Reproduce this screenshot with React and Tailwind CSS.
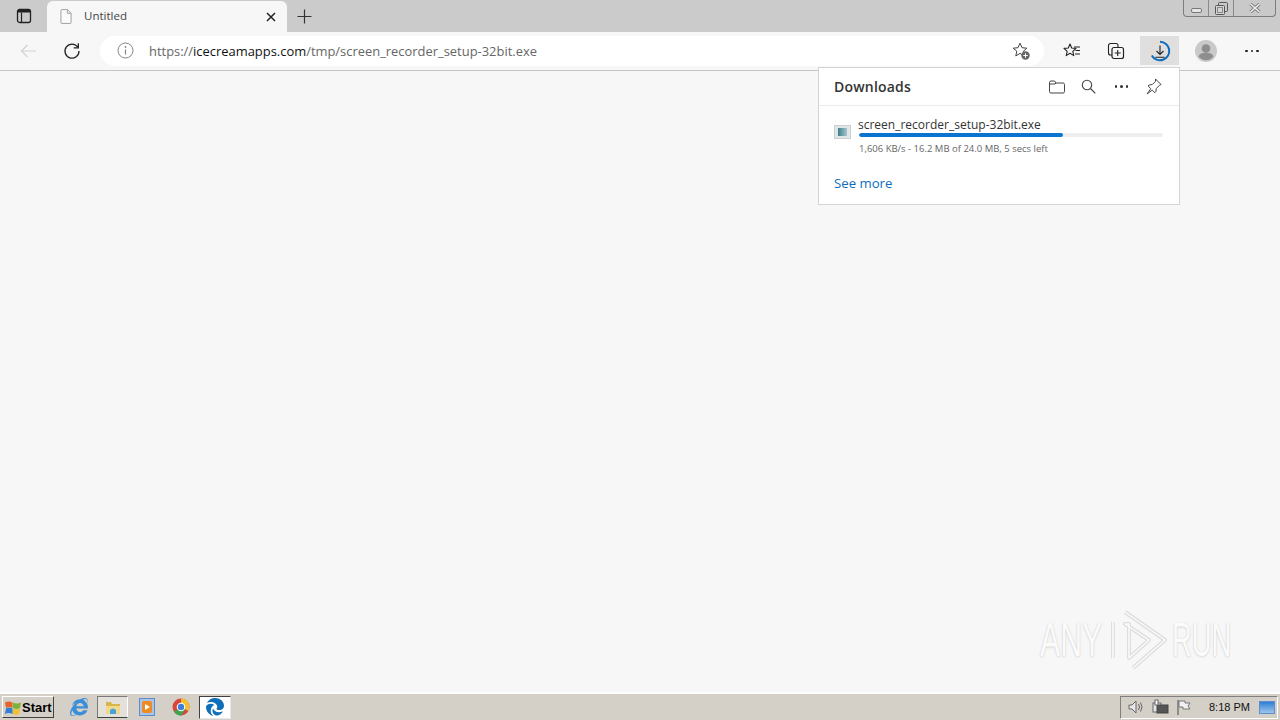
import React from "react";
import { FaInternetExplorer, FaEdge } from "react-icons/fa6";

function Ic({ w = 20, h = 20, className = "", children }) {
  return (
    <svg width={w} height={h} viewBox={`0 0 ${w} ${h}`} fill="none" className={className}>
      {children}
    </svg>
  );
}

function TitleBar() {
  return (
    <div className="flex h-8 bg-[#cbcbcb] shrink-0">
      <div className="w-[47px] flex items-center justify-center shrink-0">
        <Ic w={16} h={16}>
          <rect x="1.5" y="1.5" width="13" height="13" rx="2" stroke="#222" strokeWidth="1.3" />
          <path d="M1.5 4.5h13V3a1.5 1.5 0 0 0-1.5-1.5H3A1.5 1.5 0 0 0 1.5 3z" fill="#222" />
          <path d="M5.5 4.5v10" stroke="#222" strokeWidth="1.2" />
        </Ic>
      </div>
      <div className="w-[240px] mt-px bg-[#f7f7f7] rounded-t-[6px] flex items-center shrink-0">
        <div className="w-[12px] ml-[13px] shrink-0 flex">
          <Ic w={13} h={17}>
            <path d="M1 2a1 1 0 0 1 1-1h6l4 4v10a1 1 0 0 1-1 1H2a1 1 0 0 1-1-1z" stroke="#9a9a9a" strokeWidth="1" fill="#fbfbfb" />
            <path d="M8 1v4h4" stroke="#9a9a9a" strokeWidth="1" />
          </Ic>
        </div>
        <span className="ml-[12px] mt-[-2px] text-[11.5px] text-[#444]">Untitled</span>
        <div className="ml-auto mr-[11px] flex">
          <Ic w={10} h={10}>
            <path d="M1 1l8 8M9 1l-8 8" stroke="#222" strokeWidth="1.5" />
          </Ic>
        </div>
      </div>
      <div className="ml-[10px] flex items-center shrink-0">
        <Ic w={15} h={15}>
          <path d="M7.5 0.5v14M0.5 7.5h14" stroke="#333" strokeWidth="1.2" />
        </Ic>
      </div>
      <div className="ml-auto mr-[4px] self-start flex h-[17px] w-[93px] border border-t-0 border-[#7d7d7d] rounded-b-[4px] bg-[#c9c9c9]">
        <div className="w-[25px] border-r border-[#8a8a8a] flex items-center justify-center">
          <div className="w-[11px] h-[5px] mt-[4px] rounded-[2px] border border-[#777] bg-[#e6e6e6]" />
        </div>
        <div className="w-[25px] border-r border-[#8a8a8a] flex items-center justify-center">
          <Ic w={13} h={13}>
            <rect x="3.5" y="0.5" width="9" height="9" rx="1" stroke="#555" />
            <rect x="0.5" y="3.5" width="9" height="9" rx="1" stroke="#555" fill="#d4d4d4" />
            <rect x="2.5" y="5.5" width="5" height="5" stroke="#888" />
          </Ic>
        </div>
        <div className="flex-1 flex items-center justify-center">
          <Ic w={12} h={10}>
            <path d="M1.5 1l9 8M10.5 1l-9 8" stroke="#777" strokeWidth="3.2" />
            <path d="M1.5 1l9 8M10.5 1l-9 8" stroke="#eee" strokeWidth="1.6" />
          </Ic>
        </div>
      </div>
    </div>
  );
}

function Dots({ color }) {
  return (
    <div className="flex gap-[3px] shrink-0">
      <div className={`w-[2.5px] h-[2.5px] rounded-full ${color}`} />
      <div className={`w-[2.5px] h-[2.5px] rounded-full ${color}`} />
      <div className={`w-[2.5px] h-[2.5px] rounded-full ${color}`} />
    </div>
  );
}

function ToolBar() {
  return (
    <div className="relative flex items-center h-[39px] bg-[#f7f7f7] border-b border-[#c6c6c6] shrink-0">
      <div className="w-[100px] flex items-center shrink-0">
        <div className="ml-[20px] flex">
          <Ic w={17} h={14}>
            <path d="M16 7H1.5M7.5 1L1.5 7l6 6" stroke="#d2d2d2" strokeWidth="1.2" />
          </Ic>
        </div>
        <div className="ml-[26px] flex">
          <Ic w={18} h={18}>
            <path d="M14.8 5.2A7 7 0 1 0 16 9" stroke="#222" strokeWidth="1.3" />
            <path d="M15.3 1.2v4.6h-4.6" stroke="#222" strokeWidth="1.3" />
          </Ic>
        </div>
      </div>
      <div className="w-[944px] h-[30px] mt-[-1px] bg-white rounded-full flex items-center shrink-0">
        <div className="ml-[17px] flex">
          <Ic w={17} h={17}>
            <circle cx="8.5" cy="8.5" r="7.5" stroke="#858585" strokeWidth="1" />
            <path d="M8.5 7.5v5" stroke="#858585" strokeWidth="1.2" />
            <circle cx="8.5" cy="5" r="0.9" fill="#858585" />
          </Ic>
        </div>
        <span className="ml-[15px] mt-[2px] text-[12.93px] text-[#666] whitespace-nowrap">
          https://<span className="text-[#111]">icecreamapps.com</span>/tmp/screen_recorder_setup-32bit.exe
        </span>
        <div className="ml-auto mr-[13px] flex">
          <Ic w={20} h={20}>
            <path d="M9 2.2l2 4.5 4.8.5-3.6 3.2 1 4.7L9 12.4l-4.2 2.5 1-4.7L2.2 7.2 7 6.7z" stroke="#444" strokeWidth="1" strokeLinejoin="round" />
            <circle cx="14.5" cy="14.5" r="4.2" fill="#666" />
            <path d="M14.5 12.3v4.4M12.3 14.5h4.4" stroke="#fff" strokeWidth="1" />
          </Ic>
        </div>
      </div>
      <div className="ml-[19px] flex shrink-0">
        <Ic w={18} h={18}>
          <path d="M7 2l1.7 4 4.3.4-3.2 2.9 1 4.3L7 11.3l-3.8 2.3 1-4.3L1 6.4l4.3-.4z" stroke="#222" strokeWidth="1.1" strokeLinejoin="round" />
          <path d="M11 5h6M12.5 8.5H17M12 12h5" stroke="#222" strokeWidth="1.1" />
        </Ic>
      </div>
      <div className="ml-[26px] flex shrink-0">
        <Ic w={18} h={18}>
          <path d="M5 13H3.5A2 2 0 0 1 1.5 11V3.5a2 2 0 0 1 2-2H9a2 2 0 0 1 2 2V5" stroke="#222" strokeWidth="1.1" />
          <rect x="5" y="5.5" width="11.5" height="11" rx="2" stroke="#222" strokeWidth="1.2" fill="#f7f7f7" />
          <path d="M10.7 8v6M7.7 11h6" stroke="#222" strokeWidth="1.1" />
        </Ic>
      </div>
      <div className="ml-[15px] w-[39px] h-[29px] mt-[-1px] bg-[#dfdfdf] flex items-center justify-center shrink-0">
        <Ic w={22} h={22}>
          <circle cx="11" cy="11" r="9.3" stroke="#f3d9b8" strokeWidth="1" />
          <path d="M11 1.7A9.3 9.3 0 1 1 2.8 15.5" stroke="#0f6cbd" strokeWidth="2" />
          <path d="M11 5.5v9M7.5 11l3.5 3.5 3.5-3.5M6.5 17.2h9" stroke="#222" strokeWidth="1.1" />
        </Ic>
      </div>
      <div className="ml-[16px] flex shrink-0">
        <Ic w={22} h={22}>
          <circle cx="11" cy="11" r="11" fill="#c9c9c9" />
          <circle cx="11" cy="8.5" r="4.3" fill="#8e8e8e" />
          <path d="M3.5 16.5c1-3 3.5-3.8 7.5-3.8s6.5.8 7.5 3.8c-1.800 2.400-4.500 3.800-7.500 3.800s-5.700-1.400-7.500-3.800z" fill="#8e8e8e" />
        </Ic>
      </div>
      <div className="ml-[28px]">
        <Dots color="bg-[#222]" />
      </div>
    </div>
  );
}

function DownloadsPanel() {
  return (
    <div className="absolute left-[818px] top-[67px] w-[362px] h-[138px] bg-white border border-[#d4d4d4] z-10">
      <div className="flex items-center h-[38px] border-b border-[#ececec]">
        <span className="ml-[15px] text-[14px] font-semibold text-[#333] leading-none tracking-[0.2px]">Downloads</span>
        <div className="ml-auto flex items-center">
          <Ic w={18} h={16}>
            <path d="M1.5 3.5a1.5 1.5 0 0 1 1.5-1.5h3.5l1.5 2h7a1.5 1.5 0 0 1 1.5 1.5v7a1.5 1.5 0 0 1-1.5 1.5H3a1.5 1.5 0 0 1-1.5-1.5z" stroke="#444" strokeWidth="1" />
            <path d="M1.5 5h5.5l1-1" stroke="#444" strokeWidth="1" />
          </Ic>
          <div className="ml-[15px] flex">
            <Ic w={15} h={15}>
              <circle cx="6" cy="6" r="4.7" stroke="#444" strokeWidth="1.1" />
              <path d="M9.5 9.5l4.8 4.8" stroke="#444" strokeWidth="1.2" />
            </Ic>
          </div>
          <div className="ml-[19px]">
            <Dots color="bg-[#333]" />
          </div>
          <div className="ml-[17px] mr-[17px] flex">
            <Ic w={17} h={17}>
              <path d="M10.5 1l5.5 5.5-1.5.8-3.2 3.2-.5 3.2-1 1-2.6-2.6L2 16l3.8-5.3-2.7-2.7 1-1 3.2-.5 3.2-3.2z" stroke="#444" strokeWidth="1" strokeLinejoin="round" />
            </Ic>
          </div>
        </div>
      </div>
      <div className="flex mt-[10px]">
        <div className="ml-[15px] mt-[9px] w-[17px] h-[14px] shrink-0 border border-[#cfcfcf] bg-[#dfe6e8] flex items-center justify-center">
          <div className="w-[9px] h-[8px] bg-gradient-to-r from-[#3d7e8c] to-[#a8c6cf]" />
        </div>
        <div className="ml-[7px] w-[305px] mt-[2px]">
          <div className="text-[12px] leading-[14px] text-[#333] whitespace-nowrap">screen_recorder_setup-32bit.exe</div>
          <div className="mt-[1px] ml-[1px] h-[4px] rounded-full bg-[#eeeeee] overflow-hidden">
            <div className="h-full w-[204px] rounded-full bg-[#0a74d1]" />
          </div>
          <div className="mt-[6px] ml-[1px] text-[9.5px] leading-[12px] text-[#666] whitespace-nowrap">1,606 KB/s - 16.2 MB of 24.0 MB, 5 secs left</div>
        </div>
      </div>
      <div className="ml-[15px] mt-[20px] text-[13.2px] leading-[16px] text-[#0f6cbd]">See more</div>
    </div>
  );
}

function TaskBar() {
  return (
    <div className="flex items-center h-[28px] bg-[#d4d0c8] border-t-2 border-[#ffffff] shrink-0">
      <div className="ml-[2px] w-[52px] h-[22px] flex items-center bg-[#d4d0c8] border border-t-white border-l-white border-r-[#404040] border-b-[#404040] shrink-0">
        <div className="ml-[1px] flex">
          <Ic w={18} h={17}>
            <path d="M1 3.5q3.5-2 7.5 0v5.500q-4-2-6.500 0z" fill="#e8622c" />
            <path d="M9 3.5q4 2 8 0l-1 5.500q-3.500 2-7 0z" fill="#7bb33a" />
            <path d="M2 9.5q3-2 6.500 0v5.500q-4-2-7.500 0z" fill="#2f7fd4" />
            <path d="M9 9.5q3.500 2 7 0l-1 5.500q-3 2-6 0z" fill="#f2c12e" />
          </Ic>
        </div>
        <span className="text-[13px] font-bold text-black leading-none font-['Liberation_Sans',sans-serif]">Start</span>
      </div>
      <div className="ml-[16px] flex shrink-0 relative">
        <FaInternetExplorer size={18} color="#3a8fd8" />
      </div>
      <div className="ml-[9px] w-[31px] h-[22px] flex items-center justify-center bg-[#e4e1da] border border-t-[#7a7a7a] border-l-[#7a7a7a] border-r-white border-b-[#404040] shrink-0">
        <Ic w={16} h={16}>
          <path d="M1 3h5l1 2h8v3H1z" fill="#d9b54a" />
          <path d="M1 7h14v8H1z" fill="#f1d98c" />
          <path d="M5 15v-4q3-3 6 0v4z" fill="#4aa3d8" />
        </Ic>
      </div>
      <div className="ml-[11px] w-[16px] h-[18px] flex items-center justify-center bg-[#a9c4e6] border border-[#5f8ccf] shrink-0">
        <div className="w-[10px] h-[12px] rounded-[2px] bg-[#ee8a22] flex items-center justify-center">
          <div className="w-0 h-0 border-y-[3px] border-y-transparent border-l-[5px] border-l-white" />
        </div>
      </div>
      <div className="ml-[17px] flex shrink-0">
        <Ic w={18} h={18}>
          <circle cx="9" cy="9" r="8.5" fill="#d9453a" />
          <path d="M9 .5A8.5 8.5 0 0 1 16.5 13L9 9z" fill="#f2c12e" />
          <path d="M1.7 13.3A8.5 8.5 0 0 0 9.5 17.5L13.5 11H9z" fill="#3fa34d" />
          <circle cx="9" cy="9" r="4.3" fill="#fff" />
          <circle cx="9" cy="9" r="3.2" fill="#3e7ed8" />
        </Ic>
      </div>
      <div className="ml-[9px] w-[32px] h-[23px] flex items-center justify-center bg-white border border-t-[#404040] border-l-[#404040] border-r-[#e8e8e8] border-b-[#e8e8e8] shrink-0">
        <FaEdge size={18} color="#0f6fb8" />
      </div>
      <div className="ml-auto mr-[2px] h-[23px] w-[158px] flex items-center border border-t-[#808080] border-l-[#808080] border-r-white border-b-white shrink-0">
        <div className="ml-[7px] flex">
          <Ic w={16} h={16}>
            <path d="M1 6h3l4-4v12l-4-4H1z" stroke="#666" fill="#e6e6e6" />
            <path d="M10.5 5q2 3 0 6M12.5 3.5q3 4.5 0 9" stroke="#666" />
          </Ic>
        </div>
        <div className="ml-[8px] flex">
          <Ic w={18} h={16}>
            <rect x="1" y="4" width="8" height="9" fill="#e6e6e6" stroke="#666" />
            <rect x="5" y="6" width="11" height="8" fill="#555" stroke="#444" />
            <rect x="3" y="1" width="3" height="5" fill="#fff" stroke="#666" />
          </Ic>
        </div>
        <div className="ml-[6px] flex">
          <Ic w={16} h={17}>
            <path d="M2 1v15" stroke="#777" strokeWidth="1.5" />
            <path d="M3 2h6v2h5l-2 3 2 3H7V8H3z" fill="#f1f1f1" stroke="#777" />
          </Ic>
        </div>
        <span className="ml-[17px] text-[11px] text-[#111] leading-none whitespace-nowrap font-['Liberation_Sans',sans-serif]">8:18 PM</span>
        <div className="ml-auto mr-[2px] w-[16px] h-[13px] bg-gradient-to-b from-[#2b7fd4] to-[#9cc6ea] border border-[#5f8ccf]" />
      </div>
    </div>
  );
}

function Watermark() {
  return (
    <div className="absolute left-[1040px] top-[608px] h-[64px] flex items-center text-[48px] leading-none font-['Liberation_Sans',sans-serif] text-[#fbfbfb] [text-shadow:0_0_1px_#c8c8c8,0_1px_3px_#dcdcdc]">
      <span className="w-[62px] block scale-x-[0.63] origin-left whitespace-nowrap">ANY</span>
      <Ic w={58} h={64} className="ml-[8px]">
        <path d="M3 14v36M15 4l40 28-32 28M15 16l24 16-20 18V16z" stroke="#dedede" strokeWidth="4" strokeLinejoin="round" />
        <path d="M3 14v36M15 4l40 28-32 28M15 16l24 16-20 18V16z" stroke="#fbfbfb" strokeWidth="1.5" strokeLinejoin="round" />
      </Ic>
      <span className="ml-[4px] w-[60px] block scale-x-[0.57] origin-left whitespace-nowrap">RUN</span>
    </div>
  );
}

export default function App() {
  return (
    <div className="relative w-[1280px] h-[720px] overflow-hidden flex flex-col bg-[#f7f7f7] font-['Open_Sans','Noto_Sans',sans-serif]">
      <TitleBar />
      <ToolBar />
      <div className="flex-1" />
      <DownloadsPanel />
      <TaskBar />
      <Watermark />
    </div>
  );
}
